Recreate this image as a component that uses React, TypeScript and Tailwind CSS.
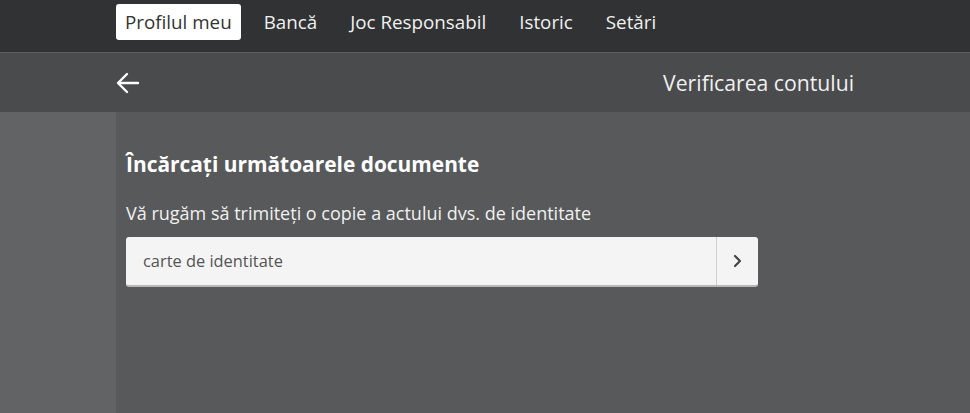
const navItems = ["Profilul meu", "Bancă", "Joc Responsabil", "Istoric", "Setări"];

export default function App() {
  return (
    <div
      className="w-[970px] h-[413px] overflow-hidden flex flex-col bg-[#58595b]"
      style={{ fontFamily: '"Open Sans", "Noto Sans", sans-serif' }}
    >
      <div className="h-[52px] shrink-0 bg-[#313234] flex items-center pl-[116px] gap-[13px]">
        {navItems.map((item, i) => (
          <div
            key={item}
            className={
              i === 0
                ? "h-[36px] px-[9px] flex items-center rounded-[3px] bg-white text-[#333] text-[18.8px] -mt-[8px]"
                : "h-[36px] px-[10px] flex items-center text-[18.8px] text-[#f0f0f0] -mt-[8px]"
            }
          >
            {item}
          </div>
        ))}
      </div>
      <div className="h-[1px] shrink-0 bg-[#5d5e60]" />
      <div className="h-[59px] shrink-0 bg-[#4a4b4d] flex items-center justify-between pl-[116px] pr-[116px]">
        <svg width="24" height="22" viewBox="0 0 24 22" fill="none" stroke="#fff" strokeWidth="2.4" strokeLinecap="round" strokeLinejoin="round">
          <path d="M22 11H3" />
          <path d="M11 2L2 11l9 9" />
        </svg>
        <div className="text-[21.2px] text-[#f0f0f0]">Verificarea contului</div>
      </div>
      <div className="flex-1 flex">
        <div className="w-[116px] shrink-0 bg-[#626365]" />
        <div className="flex-1 pl-[10px] pt-[38px]">
          <h1 className="text-[20.9px] font-bold text-white leading-[28px]">Încărcați următoarele documente</h1>
          <p className="mt-[23px] text-[18px] text-[#f0f0f0] leading-[24px]">
            Vă rugăm să trimiteți o copie a actului dvs. de identitate
          </p>
          <div className="mt-[12px] w-[632px] h-[50px] flex rounded-[3px] bg-[#f4f4f4] border-b-2 border-[#b8b8b8]">
            <div className="flex-1 flex items-center pl-[17px] text-[16.4px] text-[#555]">carte de identitate</div>
            <div className="w-[42px] border-l border-[#cfcfcf] flex items-center justify-center">
              <svg width="10" height="14" viewBox="0 0 10 14" fill="none" stroke="#444" strokeWidth="2.2" strokeLinecap="round" strokeLinejoin="round">
                <path d="M2 2l5 5-5 5" />
              </svg>
            </div>
          </div>
        </div>
      </div>
    </div>
  );
}
